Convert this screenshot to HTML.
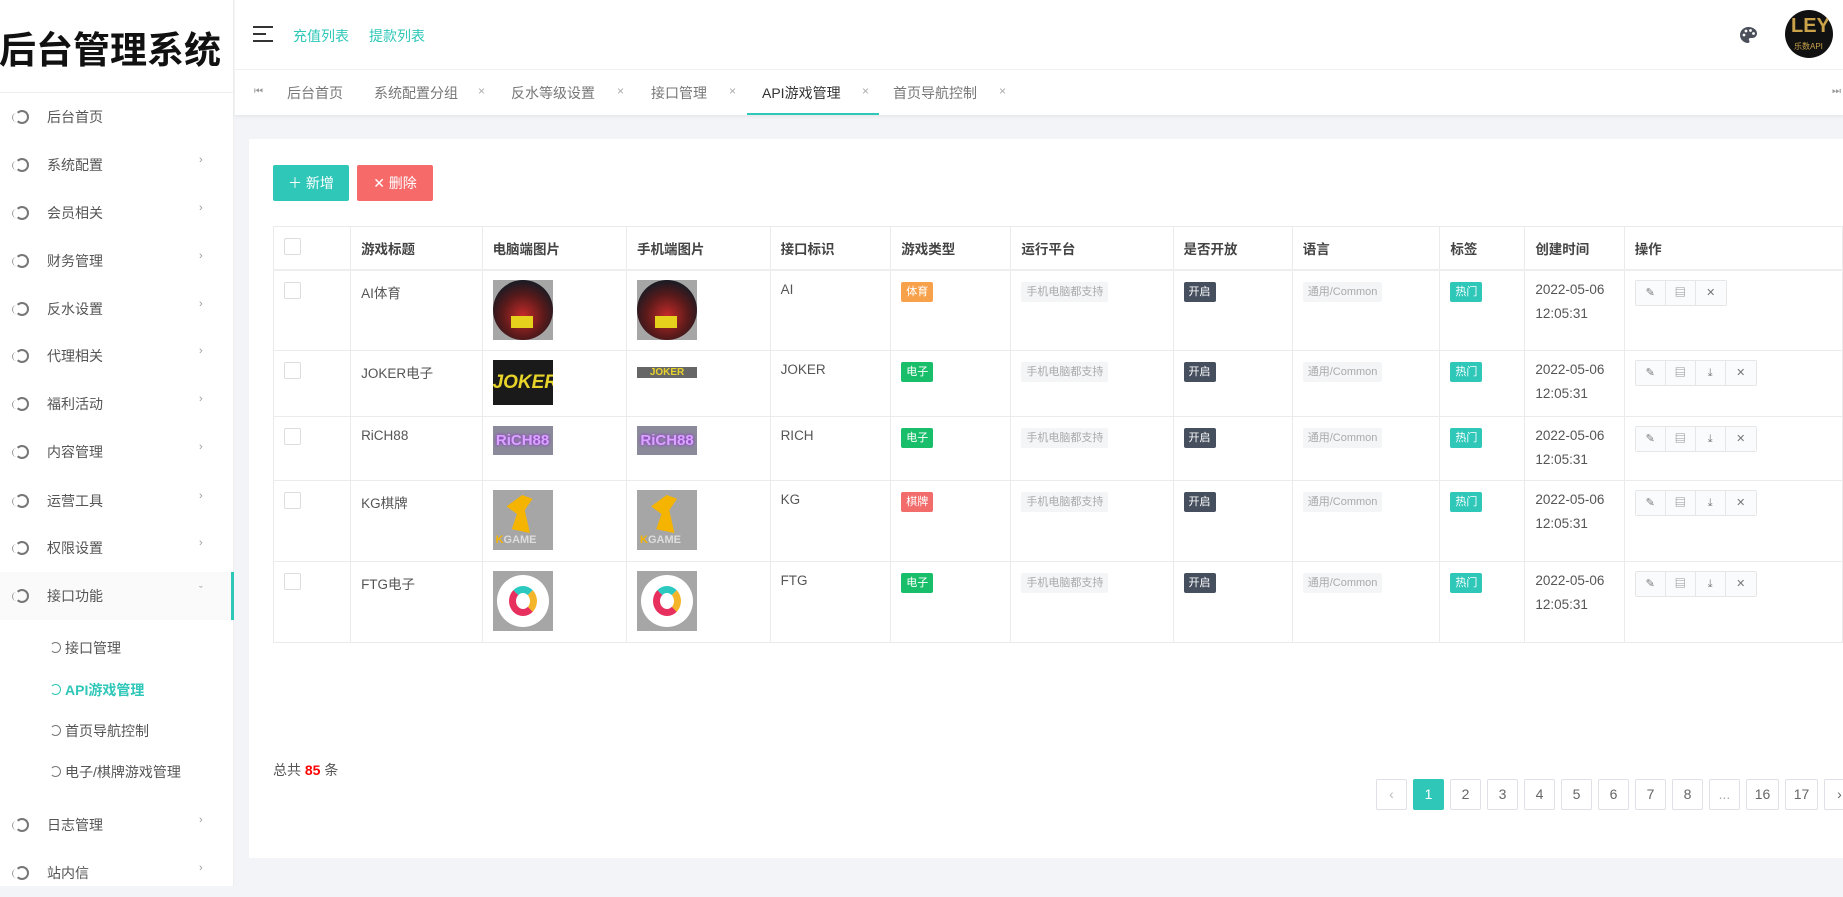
<!DOCTYPE html>
<html><head><meta charset="utf-8">
<style>
*{margin:0;padding:0;box-sizing:border-box}
body{width:1843px;height:886px;overflow:hidden;background:#f3f4f8;font-family:"Liberation Sans","Noto Sans CJK SC",sans-serif;color:#555;position:relative}
.a{position:absolute}
#side{left:0;top:0;width:234px;height:886px;background:#fff;border-right:1px solid #eee}
.logo{left:-1px;top:20px;width:240px;font-size:37px;font-weight:bold;color:#111;white-space:nowrap}
.mi{left:0;width:234px;height:48px;font-size:14px;color:#555}
.mi .ic{position:absolute;left:15px;top:17px;width:14px;height:14px;border:2px solid #777;border-radius:50%;border-left-color:transparent}
.mi .ic:after{content:"";position:absolute;left:-5px;top:1px;width:7px;height:9px;border-left:1.5px solid #999;border-radius:50%}
.mi .t{position:absolute;left:47px;top:14px}
.mi .ar{position:absolute;left:199px;top:13px;font-size:11px;color:#999}
.sub{left:0;width:234px;height:40px;font-size:14px;color:#555}
.sub .ic{position:absolute;left:50px;top:14px;width:11px;height:11px;border:1.5px solid #777;border-radius:50%;border-left-color:transparent}
.sub .t{position:absolute;left:65px;top:10px}
#head{left:235px;top:0;width:1608px;height:70px;background:#fff;border-bottom:1px solid #f0f0f0}
#tabs{left:235px;top:70px;width:1608px;height:45px;background:#fff;box-shadow:0 2px 3px rgba(0,0,0,.05);font-size:14px;color:#777}
#tabs span{position:absolute;top:13px}
#tabs .x{font-size:12px;color:#aaa;top:14px}
#card{left:249px;top:139px;width:1600px;height:719px;background:#fff}
.btn{top:165px;height:36px;width:76px;border-radius:2px;color:#fff;font-size:14px;text-align:center;line-height:36px}
table{position:absolute;left:273px;top:226px;border-collapse:collapse;font-size:13.5px;color:#555}
td,th{border:1px solid #ebebeb;vertical-align:top;text-align:left;padding:0 10px;font-weight:bold}
td{font-weight:normal;padding-top:11px}
th{height:43px;vertical-align:middle;color:#444;border-bottom:2px solid #eee}
.cb{display:inline-block;width:17px;height:17px;border:1px solid #ddd;border-radius:2px}
.tg{display:inline-block;height:20px;line-height:20px;padding:0 5px;font-size:11px;border-radius:2px;color:#fff}
.pf{background:#f4f5f7;color:#aaa}
.img{width:60px;background:#a6a6a6;margin-top:-2px;position:relative;overflow:hidden}
.ops{display:inline-flex;border:1px solid #e6e6e6;border-radius:2px;margin-top:-2px}
.ops i{width:30px;height:24px;border-right:1px solid #e6e6e6;font-style:normal;font-size:11px;color:#777;text-align:center;line-height:24px;background:#fafbfc}
.ops i:last-child{border-right:none}
.pg{top:779px;height:31px;width:31px;border:1px solid #dfe1e6;border-radius:2px;font-size:14px;color:#666;text-align:center;line-height:29px;background:#fff}
</style></head><body>
<div id="side" class="a">
<div class="a logo">后台管理系统</div>
<div class="a" style="left:0;top:92px;width:234px;border-top:1px solid #eee"></div>
<div class="a mi" style="top:93px"><i class="ic"></i><span class="t">后台首页</span></div>
<div class="a mi" style="top:141px"><i class="ic"></i><span class="t">系统配置</span><span class="ar">›</span></div>
<div class="a mi" style="top:189px"><i class="ic"></i><span class="t">会员相关</span><span class="ar">›</span></div>
<div class="a mi" style="top:237px"><i class="ic"></i><span class="t">财务管理</span><span class="ar">›</span></div>
<div class="a mi" style="top:285px"><i class="ic"></i><span class="t">反水设置</span><span class="ar">›</span></div>
<div class="a mi" style="top:332px"><i class="ic"></i><span class="t">代理相关</span><span class="ar">›</span></div>
<div class="a mi" style="top:380px"><i class="ic"></i><span class="t">福利活动</span><span class="ar">›</span></div>
<div class="a mi" style="top:428px"><i class="ic"></i><span class="t">内容管理</span><span class="ar">›</span></div>
<div class="a mi" style="top:477px"><i class="ic"></i><span class="t">运营工具</span><span class="ar">›</span></div>
<div class="a mi" style="top:524px"><i class="ic"></i><span class="t">权限设置</span><span class="ar">›</span></div>
<div class="a mi" style="top:572px;background:#fafafa;border-right:3px solid #2ec7b8"><i class="ic"></i><span class="t">接口功能</span><span class="ar">ˇ</span></div>
<div class="a sub" style="top:628px"><i class="ic"></i><span class="t">接口管理</span></div>
<div class="a sub" style="top:670px;color:#2ec7b8;font-weight:bold"><i class="ic" style="border-color:#2ec7b8;border-left-color:transparent"></i><span class="t">API游戏管理</span></div>
<div class="a sub" style="top:711px"><i class="ic"></i><span class="t">首页导航控制</span></div>
<div class="a sub" style="top:752px"><i class="ic"></i><span class="t">电子/棋牌游戏管理</span></div>
<div class="a mi" style="top:801px"><i class="ic"></i><span class="t">日志管理</span><span class="ar">›</span></div>
<div class="a mi" style="top:849px"><i class="ic"></i><span class="t">站内信</span><span class="ar">›</span></div>
</div>
<div id="head" class="a">
<svg class="a" style="left:18px;top:26px" width="20" height="16"><path d="M0 1h20M0 8h13M0 15h20" stroke="#333" stroke-width="2"/></svg>
<span class="a" style="left:58px;top:26px;font-size:14px;color:#2ec7b8">充值列表</span>
<span class="a" style="left:134px;top:26px;font-size:14px;color:#2ec7b8">提款列表</span>
<svg class="a" style="left:1505px;top:27px" width="17" height="16" viewBox="0 0 17 16"><path d="M8.5 0C3.8 0 0 3.6 0 8s3.8 8 8 8c1 0 1.5-.7 1.5-1.5 0-.9-.7-1.1-.7-2 0-.8.7-1.5 1.5-1.5h2c2.6 0 4.7-2 4.7-4.6C17 2.8 13.2 0 8.5 0z" fill="#4a4f5a"/><circle cx="4" cy="8" r="1.4" fill="#fff"/><circle cx="6" cy="4" r="1.4" fill="#fff"/><circle cx="10.5" cy="3.5" r="1.4" fill="#fff"/><circle cx="13.5" cy="6.5" r="1.4" fill="#fff"/></svg>
<div class="a" style="left:1550px;top:10px;width:48px;height:48px;border-radius:50%;background:#111;overflow:hidden">
<span class="a" style="left:6px;top:5px;font-size:20px;font-weight:bold;color:#c9a24a">LEY</span>
<span class="a" style="left:9px;top:31px;font-size:8px;color:#c9a24a">乐数API</span></div>
</div>
<div id="tabs" class="a">
<span style="left:19px;font-size:10px;top:16px;color:#999">⏮</span>
<span style="left:52px">后台首页</span>
<span style="left:139px">系统配置分组</span><span class="x" style="left:243px">×</span>
<span style="left:276px">反水等级设置</span><span class="x" style="left:382px">×</span>
<span style="left:416px">接口管理</span><span class="x" style="left:494px">×</span>
<span style="left:527px;color:#333">API游戏管理</span><span class="x" style="left:627px">×</span>
<div class="a" style="left:512px;top:43px;width:132px;height:2px;background:#2ec7b8"></div>
<span style="left:658px">首页导航控制</span><span class="x" style="left:764px">×</span>
<span style="left:1597px;font-size:10px;top:16px;color:#999">⏭</span>
</div>
<div id="card" class="a"></div>
<div class="a btn" style="left:273px;background:#2ec7b8">＋ 新增</div>
<div class="a btn" style="left:357px;background:#f66a6a">✕ 删除</div>
<table>
<tr><th style="width:78px"><span class="cb"></span></th><th style="width:133px">游戏标题</th><th style="width:146px">电脑端图片</th><th style="width:145px">手机端图片</th><th style="width:122px">接口标识</th><th style="width:122px">游戏类型</th><th style="width:165px">运行平台</th><th style="width:121px">是否开放</th><th style="width:149px">语言</th><th style="width:86px">标签</th><th style="width:100px">创建时间</th><th style="width:220px">操作</th></tr>
<tr style="height:81px"><td><span class="cb"></span></td><td>AI体育</td>
<td><div class="img" style="height:60px"><div class="a" style="left:0;top:0;width:60px;height:60px;border-radius:50%;background:radial-gradient(circle at 50% 60%,#c62a2a 0,#5a1a1a 45%,#1b1b24 75%)"></div><div class="a" style="left:18px;top:36px;width:22px;height:12px;background:#e6d21c"></div></div></td>
<td><div class="img" style="height:60px"><div class="a" style="left:0;top:0;width:60px;height:60px;border-radius:50%;background:radial-gradient(circle at 50% 60%,#c62a2a 0,#5a1a1a 45%,#1b1b24 75%)"></div><div class="a" style="left:18px;top:36px;width:22px;height:12px;background:#e6d21c"></div></div></td>
<td>AI</td><td><span class="tg" style="background:#f8a14b">体育</span></td><td><span class="tg pf">手机电脑都支持</span></td><td><span class="tg" style="background:#464f5e">开启</span></td><td><span class="tg pf">通用/Common</span></td><td><span class="tg" style="background:#2ec7b8">热门</span></td><td style="line-height:24px;padding-top:7px">2022-05-06<br>12:05:31</td>
<td><div class="ops"><i>✎</i><i>▤</i><i>✕</i></div></td></tr>
<tr style="height:66px"><td><span class="cb"></span></td><td>JOKER电子</td>
<td><div class="img" style="height:45px;background:#1a1a1a;color:#e8d32a;font-weight:bold;font-size:19px;line-height:45px;text-align:center;font-style:italic">JOKER</div></td>
<td><div class="img" style="height:11px;margin-top:5px;background:#666;color:#e8d32a;font-weight:bold;font-size:10px;line-height:11px;text-align:center">JOKER</div></td>
<td>JOKER</td><td><span class="tg" style="background:#19be6b">电子</span></td><td><span class="tg pf">手机电脑都支持</span></td><td><span class="tg" style="background:#464f5e">开启</span></td><td><span class="tg pf">通用/Common</span></td><td><span class="tg" style="background:#2ec7b8">热门</span></td><td style="line-height:24px;padding-top:7px">2022-05-06<br>12:05:31</td>
<td><div class="ops"><i>✎</i><i>▤</i><i>⤓</i><i>✕</i></div></td></tr>
<tr style="height:64px"><td><span class="cb"></span></td><td>RiCH88</td>
<td><div class="img" style="height:29px;background:#8a8a9a;color:#d9a6ff;font-weight:bold;font-size:15px;line-height:29px;text-align:center;text-shadow:0 0 3px #9b1fe0">RiCH88</div></td>
<td><div class="img" style="height:29px;background:#8a8a9a;color:#d9a6ff;font-weight:bold;font-size:15px;line-height:29px;text-align:center;text-shadow:0 0 3px #9b1fe0">RiCH88</div></td>
<td>RICH</td><td><span class="tg" style="background:#19be6b">电子</span></td><td><span class="tg pf">手机电脑都支持</span></td><td><span class="tg" style="background:#464f5e">开启</span></td><td><span class="tg pf">通用/Common</span></td><td><span class="tg" style="background:#2ec7b8">热门</span></td><td style="line-height:24px;padding-top:7px">2022-05-06<br>12:05:31</td>
<td><div class="ops"><i>✎</i><i>▤</i><i>⤓</i><i>✕</i></div></td></tr>
<tr style="height:81px"><td><span class="cb"></span></td><td>KG棋牌</td>
<td><div class="img" style="height:60px"><div class="a" style="left:14px;top:5px;width:26px;height:38px;background:#f5b400;clip-path:polygon(60% 0,100% 10%,70% 40%,90% 100%,20% 90%,40% 50%,0 30%)"></div><span class="a" style="left:3px;top:44px;font-size:11px;font-weight:bold;color:#ddd"><b style="color:#f5b400">K</b>GAME</span></div></td>
<td><div class="img" style="height:60px"><div class="a" style="left:14px;top:5px;width:26px;height:38px;background:#f5b400;clip-path:polygon(60% 0,100% 10%,70% 40%,90% 100%,20% 90%,40% 50%,0 30%)"></div><span class="a" style="left:3px;top:44px;font-size:11px;font-weight:bold;color:#ddd"><b style="color:#f5b400">K</b>GAME</span></div></td>
<td>KG</td><td><span class="tg" style="background:#f36c6c">棋牌</span></td><td><span class="tg pf">手机电脑都支持</span></td><td><span class="tg" style="background:#464f5e">开启</span></td><td><span class="tg pf">通用/Common</span></td><td><span class="tg" style="background:#2ec7b8">热门</span></td><td style="line-height:24px;padding-top:7px">2022-05-06<br>12:05:31</td>
<td><div class="ops"><i>✎</i><i>▤</i><i>⤓</i><i>✕</i></div></td></tr>
<tr style="height:81px"><td><span class="cb"></span></td><td>FTG电子</td>
<td><div class="img" style="height:60px"><div class="a" style="left:4px;top:4px;width:52px;height:52px;border-radius:50%;background:#fff"></div><div class="a" style="left:16px;top:15px;width:28px;height:30px;border-radius:50%;border:7px solid #e8305f;border-top-color:#2cc9c0;border-right-color:#f5b52a"></div></div></td>
<td><div class="img" style="height:60px"><div class="a" style="left:4px;top:4px;width:52px;height:52px;border-radius:50%;background:#fff"></div><div class="a" style="left:16px;top:15px;width:28px;height:30px;border-radius:50%;border:7px solid #e8305f;border-top-color:#2cc9c0;border-right-color:#f5b52a"></div></div></td>
<td>FTG</td><td><span class="tg" style="background:#19be6b">电子</span></td><td><span class="tg pf">手机电脑都支持</span></td><td><span class="tg" style="background:#464f5e">开启</span></td><td><span class="tg pf">通用/Common</span></td><td><span class="tg" style="background:#2ec7b8">热门</span></td><td style="line-height:24px;padding-top:7px">2022-05-06<br>12:05:31</td>
<td><div class="ops"><i>✎</i><i>▤</i><i>⤓</i><i>✕</i></div></td></tr>
</table>
<div class="a" style="left:273px;top:760px;font-size:14px;color:#555">总共 <b style="color:#f00">85</b> 条</div>
<div class="a pg" style="left:1376px;color:#bbb">‹</div>
<div class="a pg" style="left:1413px;background:#2ec7b8;border-color:#2ec7b8;color:#fff">1</div>
<div class="a pg" style="left:1450px">2</div>
<div class="a pg" style="left:1487px">3</div>
<div class="a pg" style="left:1524px">4</div>
<div class="a pg" style="left:1561px">5</div>
<div class="a pg" style="left:1598px">6</div>
<div class="a pg" style="left:1635px">7</div>
<div class="a pg" style="left:1672px">8</div>
<div class="a pg" style="left:1709px;color:#aaa">...</div>
<div class="a pg" style="left:1746px;width:33px">16</div>
<div class="a pg" style="left:1785px;width:33px">17</div>
<div class="a pg" style="left:1824px">›</div>
</body></html>
